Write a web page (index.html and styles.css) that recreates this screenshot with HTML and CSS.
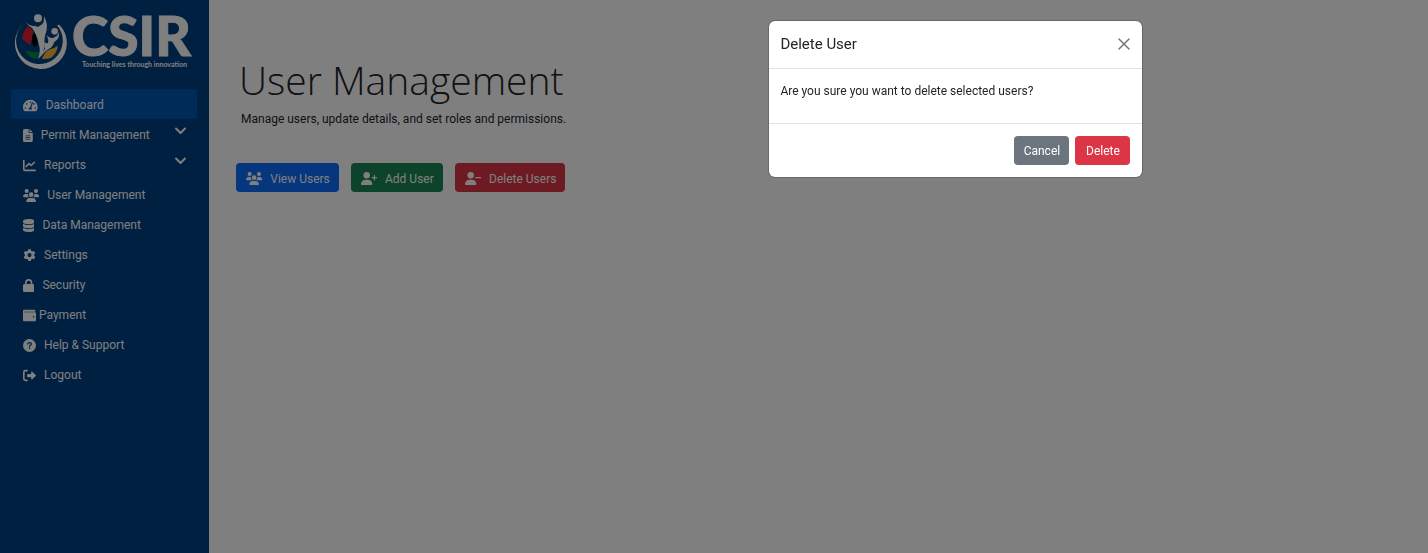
FILE: index.html
```html
<!DOCTYPE html>
<html lang="en">
<head>
<meta charset="utf-8">
<meta name="viewport" content="width=device-width, initial-scale=1">
<title>User Management</title>
<link rel="stylesheet" href="styles.css">
</head>
<body>
<svg class="sprite" aria-hidden="true">
  <symbol id="users" viewBox="0 0 640 512"><circle cx="144" cy="80" r="80"/><circle cx="512" cy="80" r="80"/><circle cx="320" cy="224" r="92"/><path d="M0 299c0-59 48-107 107-107h42c16 0 31 4 45 10-1 7-2 14-2 22 0 38 17 73 43 96H21c-11 0-21-10-21-21zM405 320c27-23 43-58 43-96 0-8-1-15-2-22 14-6 29-10 45-10h42c59 0 107 48 107 107 0 11-10 21-21 21H405zM128 485c0-73 60-133 133-133h118c73 0 133 60 133 133 0 15-12 27-27 27H155c-15 0-27-12-27-27z"/></symbol>
  <symbol id="user-plus" viewBox="0 0 640 512"><circle cx="224" cy="128" r="128"/><path d="M0 482c0-98 80-178 178-178h92c98 0 178 80 178 178 0 17-13 30-30 30H30c-17 0-30-13-30-30zM504 312v-64h-64c-32 0-32-48 0-48h64v-64c0-32 48-32 48 0v64h64c32 0 32 48 0 48h-64v64c0 32-48 32-48 0z"/></symbol>
  <symbol id="user-minus" viewBox="0 0 640 512"><circle cx="224" cy="128" r="128"/><path d="M0 482c0-98 80-178 178-178h92c98 0 178 80 178 178 0 17-13 30-30 30H30c-17 0-30-13-30-30zM424 200h192c32 0 32 48 0 48H424c-32 0-32-48 0-48z"/></symbol>
  <symbol id="chevron" viewBox="0 0 12 8"><path d="M1.5 1.5 6 6l4.500-4.500" fill="none" stroke="currentColor" stroke-width="2" stroke-linecap="round" stroke-linejoin="round"/></symbol>
</svg>

<div class="app">
  <aside class="sidebar">
    <a class="brand" href="#" aria-label="CSIR home">
      <svg class="emblem" viewBox="12 10 162 174" aria-hidden="true">
        <path fill="#fff" d="M44 42A78 78 0 1 0 148 48L141 50A70 70 0 1 1 44 42z"/>
        <path fill="#e31e2d" d="M56 52Q38 66 36 90q12 9 24 20 7-24 10-42z"/>
        <ellipse cx="75" cy="94" rx="9" ry="20" fill="#000"/>
        <path fill="#078a45" d="M44 125q22 8 43 6-1 12-10 20-21-6-33-26z"/>
        <path fill="#f6b83c" d="M96 151q7-21 20-28 14-3 28-12-4 24-22 37-13 4-26 3z"/>
        <circle cx="84" cy="29" r="12" fill="#fff"/>
        <path fill="#fff" d="M46 38q12 17 31 13 5 7 12 0 15-3 13-28 13 23 7 45-7 18-6 48-3 25-20 35 11-23 3-45-7-32-20-48-14-8-20-20z"/>
        <circle cx="134" cy="68" r="10" fill="#fff"/>
        <path fill="#fff" d="M110 80q9 10 20 7 14-5 17-17 3 20-14 30-6 17-17 21-14 8-25 24 7-17 14-24-4-8-2-21 7 6 11 3 3-9-4-23z"/>
      </svg>
      <span class="wordmark"><span class="name">CSIR</span><span class="tagline">Touching lives through innovation</span></span>
    </a>
    <nav class="nav">
      <a class="item active" href="#"><svg class="icon" viewBox="0 0 576 512"><path d="M288 32C128.940 32 0 160.940 0 320c0 52.800 14.250 102.260 39.060 144.800 5.610 9.620 16.300 15.200 27.440 15.200h443c11.140 0 21.830-5.580 27.440-15.200C561.750 422.260 576 372.800 576 320c0-159.060-128.940-288-288-288zm0 64c17.670 0 32 14.330 32 32s-14.330 32-32 32-32-14.330-32-32 14.330-32 32-32zM96 384c-17.670 0-32-14.330-32-32s14.330-32 32-32 32 14.330 32 32-14.330 32-32 32zm48-160c-17.670 0-32-14.330-32-32s14.330-32 32-32 32 14.330 32 32-14.330 32-32 32zm246.770-72.410l-61.330 184C343.130 347.330 352 364.540 352 384c0 11.720-3.380 22.550-8.880 32H232.880c-5.500-9.450-8.880-20.280-8.880-32 0-33.940 26.500-61.430 59.900-63.590l61.340-184.010c4.170-12.560 17.730-19.450 30.360-15.170 12.570 4.190 19.350 17.790 15.170 30.360zM432 224a32 32 0 1 1 0-64 32 32 0 0 1 0 64zm48 160a32 32 0 1 1 0-64 32 32 0 0 1 0 64z"/></svg><span>Dashboard</span></a>
      <a class="item" href="#"><svg class="icon" viewBox="0 0 384 512"><path fill-rule="evenodd" d="M64 0C29 0 0 29 0 64v384c0 35 29 64 64 64h256c35 0 64-29 64-64V160H256c-18 0-32-14-32-32V0zM256 0v128h128zM112 256h160c21 0 21 32 0 32H112c-21 0-21-32 0-32zm0 64h160c21 0 21 32 0 32H112c-21 0-21-32 0-32zm0 64h160c21 0 21 32 0 32H112c-21 0-21-32 0-32z"/></svg><span>Permit Management</span><svg class="chevron"><use href="#chevron"/></svg></a>
      <a class="item" href="#"><svg class="icon" viewBox="0 0 512 512"><path fill="none" stroke="currentColor" stroke-width="64" stroke-linecap="round" stroke-linejoin="round" d="M32 64v336q0 48 48 48h400M128 288l112-112 80 80 128-128"/></svg><span>Reports</span><svg class="chevron"><use href="#chevron"/></svg></a>
      <a class="item" href="#"><svg class="icon" viewBox="0 0 640 512"><use href="#users"/></svg><span>User Management</span></a>
      <a class="item" href="#"><svg class="icon" viewBox="0 0 448 512"><path d="M448 80v48c0 44-100 80-224 80S0 172 0 128V80C0 36 100 0 224 0s224 36 224 80zM0 186c48 38 136 54 224 54s176-16 224-54v102c0 44-100 80-224 80S0 332 0 288zm0 160c48 38 136 54 224 54s176-16 224-54v86c0 44-100 80-224 80S0 476 0 432z"/></svg><span>Data Management</span></a>
      <a class="item" href="#"><svg class="icon" viewBox="0 0 512 512"><path fill-rule="evenodd" d="M204 8h104l16 66q24 9 42 24l66-20 52 90-49 47q5 25 0 50l49 47-52 90-66-20q-18 15-42 24l-16 66H204l-16-66q-24-9-42-24l-66 20-52-90 49-47q-5-25 0-50l-49-47 52-90 66 20q18-15 42-24zM256 160a80 80 0 1 0 0 160 80 80 0 0 0 0-160z"/></svg><span>Settings</span></a>
      <a class="item" href="#"><svg class="icon" viewBox="0 0 448 512"><path fill-rule="evenodd" d="M80 192v-48a144 144 0 0 1 288 0v48h16c35 0 64 29 64 64v192c0 35-29 64-64 64H64c-35 0-64-29-64-64V256c0-35 29-64 64-64zm64 0h160v-48a80 80 0 0 0-160 0z"/></svg><span>Security</span></a>
      <a class="item tight" href="#"><svg class="icon" viewBox="0 0 512 512"><path fill-rule="evenodd" d="M48 32C20 32 0 52 0 80v352c0 28 20 48 48 48h416c28 0 48-20 48-48V176c0-28-20-48-48-48H80c-21 0-21-24 0-24h400c16 0 16-72-32-72zm368 240a32 32 0 1 1 0 64 32 32 0 0 1 0-64z"/></svg><span>Payment</span></a>
      <a class="item" href="#"><svg class="icon" viewBox="0 0 512 512"><circle cx="256" cy="256" r="256"/><path class="cut" d="M184 200c0-76 150-76 150 0 0 52-78 44-78 96"/><circle class="cut-dot" cx="256" cy="366" r="32"/></svg><span>Help &amp; Support</span></a>
      <a class="item" href="#"><svg class="icon" viewBox="0 0 512 512"><path fill="none" stroke="currentColor" stroke-width="64" stroke-linecap="round" d="M160 64H96q-64 0-64 64v256q0 64 64 64h64"/><path d="M502 278c13-12 13-32 0-44L366 106c-16-15-46-4-46 22v64H192c-18 0-32 14-32 32v64c0 18 14 32 32 32h128v64c0 26 30 37 46 22z"/></svg><span>Logout</span></a>
    </nav>
  </aside>

  <main class="main">
    <h1 class="title">User Management</h1>
    <p class="lead">Manage users, update details, and set roles and permissions.</p>
    <div class="actions">
      <button class="btn primary" type="button"><svg class="icon" viewBox="0 0 640 512"><use href="#users"/></svg>View Users</button>
      <button class="btn success" type="button"><svg class="icon" viewBox="0 0 640 512"><use href="#user-plus"/></svg>Add User</button>
      <button class="btn danger" type="button"><svg class="icon" viewBox="0 0 640 512"><use href="#user-minus"/></svg>Delete Users</button>
    </div>
  </main>
</div>

<div class="backdrop">
  <section class="dialog" role="dialog" aria-modal="true" aria-labelledby="dialog-title">
    <header class="dialog-head">
      <h2 class="dialog-title" id="dialog-title">Delete User</h2>
      <button class="close" type="button" aria-label="Close"><svg viewBox="0 0 12 12"><path d="M1 1l10 10M11 1 1 11"/></svg></button>
    </header>
    <div class="dialog-body"><p>Are you sure you want to delete selected users?</p></div>
    <footer class="dialog-foot">
      <button class="btn secondary" type="button">Cancel</button>
      <button class="btn danger" type="button">Delete</button>
    </footer>
  </section>
</div>
</body>
</html>
```

FILE: styles.css
```css
* { box-sizing: border-box; }
body {
  margin: 0;
  font: 12px/20px Roboto, "Open Sans", sans-serif;
  color: #212529;
  background: #fff;
}
.sprite { position: absolute; width: 0; height: 0; }
.app { display: flex; min-height: 100vh; }

.sidebar {
  flex: none;
  width: 209px;
  padding: 12px 12px 12px 11px;
  color: #fff;
  background: #004085;
}
.brand {
  display: flex;
  gap: 4px;
  height: 60px;
  margin: 0 0 17px 3px;
  color: inherit;
  text-decoration: none;
}
.emblem { width: 54px; height: 58px; }
.wordmark { display: flex; flex-direction: column; font-family: Lato, sans-serif; }
.name { font-size: 55px; line-height: 46px; font-weight: 900; -webkit-text-stroke: 1px #fff; }
.tagline { padding-left: 10px; font-size: 7px; line-height: 12px; font-weight: 700; white-space: nowrap; }

.item {
  display: flex;
  align-items: center;
  gap: 8px;
  height: 30px;
  padding: 2px 10px 0 12px;
  color: inherit;
  text-decoration: none;
}
.item.active { background: #0056b3; }
.item.tight { gap: 3px; }
.icon { flex: none; height: 13px; fill: currentColor; }
.chevron { width: 13px; height: 8px; margin: 0 0 8px auto; }
.cut { fill: none; stroke: #004085; stroke-width: 48; stroke-linecap: round; }
.cut-dot { fill: #004085; }

.main { flex: 1; padding: 53px 27px; }
.title {
  margin: 0 0 0 3px;
  font-family: "Open Sans", "Noto Sans", sans-serif;
  font-size: 39px;
  line-height: 54px;
  font-weight: 300;
}
.lead { margin: 2px 0 0 5px; }
.actions { display: flex; gap: 12px; margin-top: 34px; }

.btn {
  display: flex;
  align-items: center;
  gap: 8px;
  height: 29px;
  padding: 2px 9px 0 10px;
  border: 0;
  border-radius: 4px;
  font: inherit;
  color: #fff;
}
.primary { background: #0d6efd; }
.success { background: #198754; }
.danger { background: #dc3545; }
.secondary { background: #6c757d; }

.backdrop {
  position: fixed;
  inset: 0;
  display: flex;
  justify-content: flex-end;
  align-items: flex-start;
  padding: 20px calc(20% - 1px) 20px 20px;
  background: rgba(0, 0, 0, .5);
}
.dialog {
  width: 375px;
  border: 1px solid rgba(0, 0, 0, .18);
  border-radius: 7px;
  background: #fff;
  background-clip: padding-box;
}
.dialog-head {
  display: flex;
  align-items: center;
  justify-content: space-between;
  height: 48px;
  padding: 0 12px 2px 11px;
  border-bottom: 1px solid #dee2e6;
}
.dialog-title { margin: 0; font-size: 15px; line-height: 22px; font-weight: 400; }
.close { display: flex; padding: 0; border: 0; background: none; }
.close svg { width: 12px; height: 12px; fill: none; stroke: #777; stroke-width: 1.500; stroke-linecap: round; }
.dialog-body { padding: 12px 11px 22px; }
.dialog-body p { margin: 0; }
.dialog-foot {
  display: flex;
  justify-content: flex-end;
  gap: 6px;
  padding: 12px;
  border-top: 1px solid #dee2e6;
}
.dialog-foot .btn {
  justify-content: center;
  min-width: 55px;
  padding: 0 9px;
}
```
